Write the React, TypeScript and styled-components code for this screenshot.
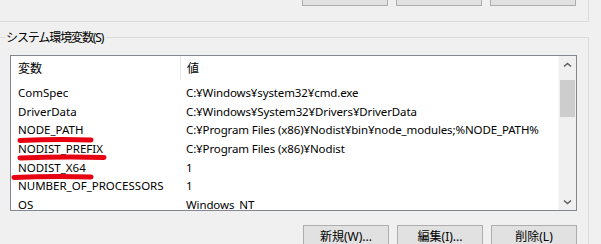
import React from 'react';
import styled, { createGlobalStyle } from 'styled-components';

const font = `"Noto Sans", "Noto Sans CJK JP", sans-serif`;

const GlobalStyle = createGlobalStyle`
  html, body {
    margin: 0;
    padding: 0;
    background: #f0f0f0;
  }
  body {
    font-family: ${font};
  }
`;

const Page = styled.div`
  position: relative;
  width: 601px;
  height: 244px;
  overflow: hidden;
  background: #f0f0f0;
  font-family: ${font};
  font-size: 11.5px;
  color: #000;
`;

const UserGroup = styled.div`
  width: 588px;
  height: 21px;
  border-right: 1px solid #dcdcdc;
  border-bottom: 1px solid #dcdcdc;
  display: flex;
  justify-content: flex-end;
  padding-right: 12px;
  box-sizing: content-box;
  margin-left: -12px;
`;

const ButtonRow = styled.div<{ $top?: number }>`
  display: flex;
  justify-content: flex-end;
  gap: 8px;
  margin-top: ${({ $top }) => $top ?? 0}px;
`;

const Button = styled.button`
  width: 86px;
  height: 24px;
  box-sizing: border-box;
  background: #e1e1e1;
  border: 1px solid #adadad;
  border-radius: 0;
  padding: 0 0 3px 0;
  font-family: ${font};
  font-size: 12px;
  color: #000;
`;

const SystemGroup = styled.div`
  margin-top: 8px;
  width: 589px;
`;

const GroupHeader = styled.div`
  display: flex;
  height: 16px;
`;

const LeadLine = styled.div`
  width: 5px;
  margin-top: 7px;
  border-top: 1px solid #dcdcdc;
`;

const TrailLine = styled.div`
  flex: 1;
  margin-top: 7px;
  margin-left: 3px;
  border-top: 1px solid #dcdcdc;
  border-right: 1px solid #dcdcdc;
`;

const GroupLabel = styled.span`
  padding-left: 1px;
  font-size: 12px;
  line-height: 16px;
  letter-spacing: -1.1px;
  white-space: nowrap;
`;

const GroupBody = styled.div`
  border-right: 1px solid #dcdcdc;
  padding: 9px 11px 0 10px;
  height: 200px;
`;

const ListView = styled.div`
  display: flex;
  height: 156px;
  box-sizing: border-box;
  border: 1px solid #828790;
  background: #fff;
`;

const ListContent = styled.div`
  flex: 1;
  display: flex;
  flex-direction: column;
  overflow: hidden;
`;

const HeaderRow = styled.div`
  display: flex;
  height: 24px;
  padding-bottom: 3.9px;
  flex-shrink: 0;
`;

const HeaderCell = styled.div<{ $width?: number; $divider?: boolean }>`
  ${({ $width }) => ($width ? `width: ${$width}px;` : 'flex: 1;')}
  box-sizing: border-box;
  padding-left: ${({ $divider }) => ($divider ? 6 : 7)}px;
  padding-top: 4px;
  line-height: 18px;
  font-size: 12px;
  border-left: ${({ $divider }) => ($divider ? '1px solid #e5e5e5' : 'none')};
`;

const Row = styled.div`
  display: flex;
  flex-shrink: 0;
  height: 18.67px;
  line-height: 18.67px;
  white-space: nowrap;
`;

const NameCell = styled.div`
  width: 169px;
  box-sizing: border-box;
  padding-left: 7px;
`;

const ValueCell = styled.div`
  flex: 1;
  padding-left: 6px;
  letter-spacing: -0.12px;
  overflow: hidden;
`;

const ScrollBar = styled.div`
  width: 17px;
  display: flex;
  flex-direction: column;
  background: #f0f0f0;
  border-left: 1px solid #f7f7f7;
`;

const ArrowButton = styled.div`
  height: 17px;
  display: flex;
  align-items: center;
  justify-content: center;
`;

const Track = styled.div`
  flex: 1;
  padding: 7px 1px 0 1px;
`;

const Thumb = styled.div`
  height: 37px;
  background: #cdcdcd;
`;

const BottomButtons = styled(ButtonRow)`
  margin-top: 14px;
`;

const Marks = styled.svg`
  position: absolute;
  left: 0;
  top: 0;
  pointer-events: none;
`;

const rows: [string, string][] = [
  ['ComSpec', 'C:¥Windows¥system32¥cmd.exe'],
  ['DriverData', 'C:¥Windows¥System32¥Drivers¥DriverData'],
  ['NODE_PATH', 'C:¥Program Files (x86)¥Nodist¥bin¥node_modules;%NODE_PATH%'],
  ['NODIST_PREFIX', 'C:¥Program Files (x86)¥Nodist'],
  ['NODIST_X64', '1'],
  ['NUMBER_OF_PROCESSORS', '1'],
  ['OS', 'Windows_NT'],
];

const Chevron: React.FC<{ down?: boolean }> = ({ down }) => (
  <svg width="9" height="6" viewBox="0 0 9 6">
    <path
      d={down ? 'M1 1.5 L4.5 4.5 L8 1.5' : 'M1 4.5 L4.5 1.5 L8 4.5'}
      fill="none"
      stroke="#606060"
      strokeWidth="1.6"
    />
  </svg>
);

const App: React.FC = () => {
  return (
    <>
      <GlobalStyle />
      <Page>
        <UserGroup>
          <ButtonRow $top={-18}>
            <Button>新規(N)...</Button>
            <Button>編集(E)...</Button>
            <Button>削除(D)</Button>
          </ButtonRow>
        </UserGroup>

        <SystemGroup>
          <GroupHeader>
            <LeadLine />
            <GroupLabel>システム環境変数(S)</GroupLabel>
            <TrailLine />
          </GroupHeader>
          <GroupBody>
            <ListView>
              <ListContent>
                <HeaderRow>
                  <HeaderCell $width={169}>変数</HeaderCell>
                  <HeaderCell $divider>値</HeaderCell>
                </HeaderRow>
                {rows.map(([name, value]) => (
                  <Row key={name}>
                    <NameCell>{name}</NameCell>
                    <ValueCell>{value}</ValueCell>
                  </Row>
                ))}
              </ListContent>
              <ScrollBar>
                <ArrowButton>
                  <Chevron />
                </ArrowButton>
                <Track>
                  <Thumb />
                </Track>
                <ArrowButton>
                  <Chevron down />
                </ArrowButton>
              </ScrollBar>
            </ListView>
            <BottomButtons>
              <Button>新規(W)...</Button>
              <Button>編集(I)...</Button>
              <Button>削除(L)</Button>
            </BottomButtons>
          </GroupBody>
        </SystemGroup>

        <Marks width="601" height="244" viewBox="0 0 601 244">
          <g fill="none" stroke="#e60012" strokeWidth="5" strokeLinecap="round">
            <path d="M20 140.5 Q55 139 91 140" />
            <path d="M20 158 Q62 156.5 104 157.5" />
            <path d="M14 177.5 Q52 176 91 177" />
          </g>
        </Marks>
      </Page>
    </>
  );
};

export default App;
